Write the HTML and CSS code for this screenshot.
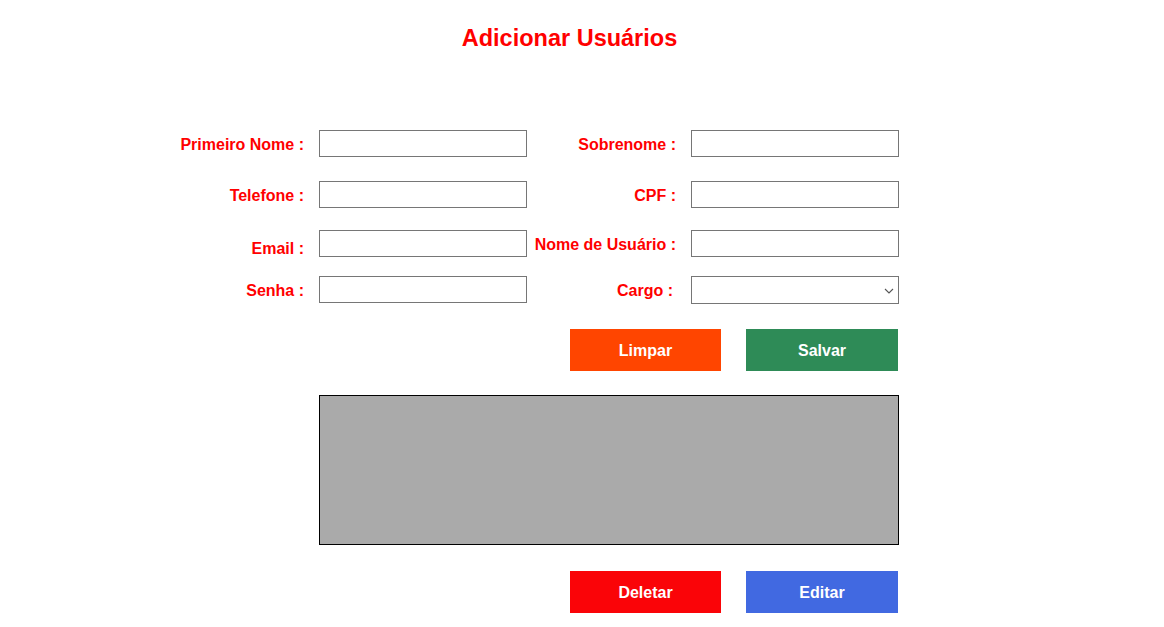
FILE: index.html
```html
<!DOCTYPE html>
<html lang="pt-BR">
<head>
<meta charset="utf-8">
<title>Adicionar Usuários</title>
<link rel="stylesheet" href="styles.css">
</head>
<body>
<div class="page">
  <h1 class="title">Adicionar Usuários</h1>
  <form class="form">
    <div class="row row-1">
      <label class="lbl">Primeiro Nome :</label>
      <input class="field" type="text">
      <label class="lbl">Sobrenome :</label>
      <input class="field" type="text">
    </div>
    <div class="row row-2">
      <label class="lbl">Telefone :</label>
      <input class="field" type="text">
      <label class="lbl">CPF :</label>
      <input class="field" type="text">
    </div>
    <div class="row row-3">
      <label class="lbl lbl-low">Email :</label>
      <input class="field" type="text">
      <label class="lbl">Nome de Usuário :</label>
      <input class="field" type="text">
    </div>
    <div class="row row-4">
      <label class="lbl">Senha :</label>
      <input class="field field-top" type="password">
      <label class="lbl lbl-cargo">Cargo :</label>
      <div class="select-wrap">
        <select class="field select"><option></option></select>
        <svg class="chevron" width="10" height="6" viewBox="0 0 10 6"><path d="M1 1 L5 5 L9 1" fill="none" stroke="#555" stroke-width="1.1"/></svg>
      </div>
    </div>
    <div class="actions actions-top">
      <button type="button" class="btn btn-limpar">Limpar</button>
      <button type="button" class="btn btn-salvar">Salvar</button>
    </div>
    <div class="table-box"></div>
    <div class="actions actions-bottom">
      <button type="button" class="btn btn-deletar">Deletar</button>
      <button type="button" class="btn btn-editar">Editar</button>
    </div>
  </form>
</div>
</body>
</html>
```

FILE: styles.css
```css
html, body {
  margin: 0;
  padding: 0;
  background: #ffffff;
}

body {
  font-family: "Liberation Sans", Arial, sans-serif;
}

.page {
  width: 1139px;
}

.title {
  margin: 0;
  padding-top: 24px;
  height: 28px;
  line-height: 28px;
  text-align: center;
  color: #ff0000;
  font-size: 23.5px;
  font-weight: bold;
}

.form {
  width: 899px;
  padding-top: 78px;
}

.row {
  display: grid;
  grid-template-columns: 319px 208px 164px 208px;
  align-items: center;
}

.row-1 { height: 27px; }
.row-2 { height: 27px; margin-top: 24px; }
.row-3 { height: 27px; margin-top: 22px; }
.row-4 { height: 28px; margin-top: 19px; }

.lbl {
  position: relative;
  top: 1px;
  text-align: right;
  padding-right: 15px;
  color: #ff0000;
  font-size: 16px;
  font-weight: bold;
  white-space: nowrap;
}

.lbl-low {
  top: 5px;
}

.lbl-cargo {
  padding-right: 18px;
}

.field {
  box-sizing: border-box;
  width: 208px;
  height: 27px;
  margin: 0;
  border: 1px solid #767676;
  border-radius: 0;
  background: #ffffff;
  font-family: inherit;
  font-size: 14px;
  padding: 0 4px;
  outline: none;
}

.field-top {
  align-self: start;
}

.select-wrap {
  position: relative;
  width: 208px;
  height: 28px;
}

.select {
  height: 28px;
  -webkit-appearance: none;
  appearance: none;
}

.chevron {
  position: absolute;
  right: 5px;
  top: 12px;
  pointer-events: none;
}

.actions {
  display: flex;
  justify-content: flex-end;
  gap: 25px;
  padding-right: 1px;
}

.actions-top {
  margin-top: 25px;
}

.actions-bottom {
  margin-top: 26px;
}

.btn {
  width: 151px;
  height: 42px;
  border: none;
  border-radius: 0;
  padding: 2px 0 0;
  margin: 0;
  color: #ffffff;
  font-family: inherit;
  font-size: 16px;
  font-weight: bold;
  cursor: pointer;
}

.btn-salvar,
.btn-editar {
  width: 152px;
}

.btn-limpar { background: #ff4500; }
.btn-salvar { background: #2e8b57; }
.btn-deletar { background: #fa0408; }
.btn-editar { background: #4169e1; }

.table-box {
  box-sizing: border-box;
  margin-top: 24px;
  margin-left: 319px;
  width: 580px;
  height: 150px;
  background: #aaaaaa;
  border: 1px solid #000000;
}
```
